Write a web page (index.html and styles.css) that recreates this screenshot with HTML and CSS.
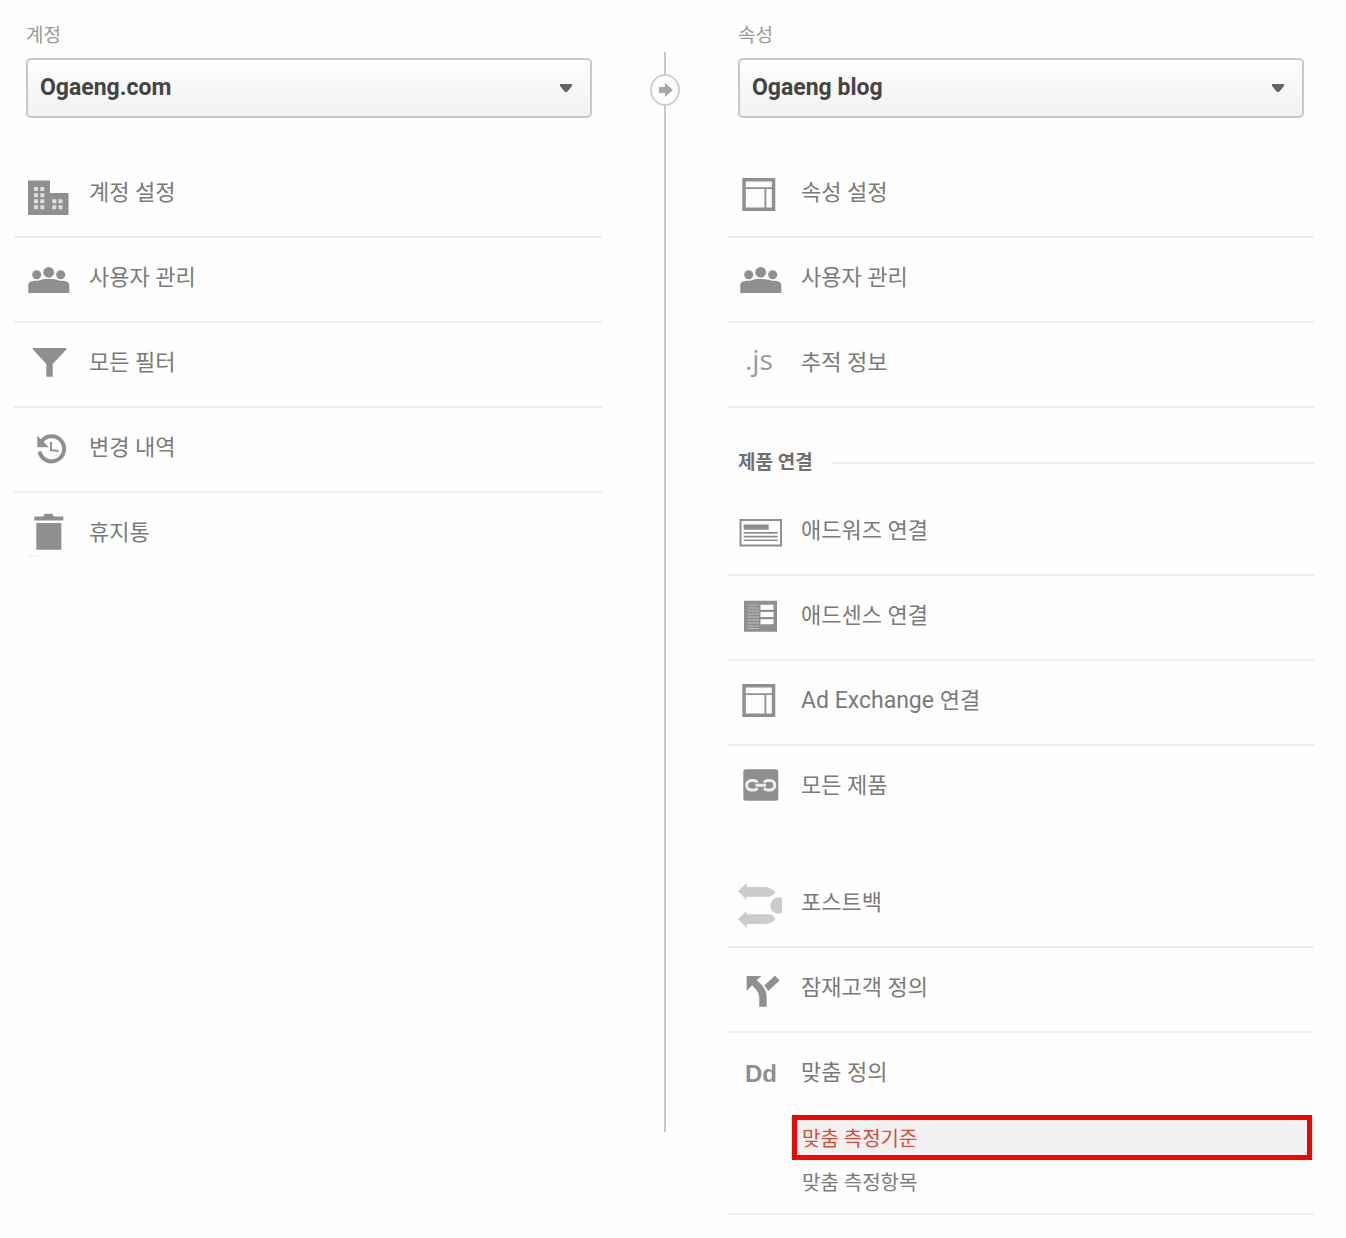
FILE: index.html
```html
<!DOCTYPE html>
<html lang="ko">
<head>
<meta charset="utf-8">
<meta name="viewport" content="width=device-width, initial-scale=1">
<title>관리</title>
<link rel="stylesheet" href="styles.css">
</head>
<body>
<svg class="sprite" aria-hidden="true">
  <symbol id="users" viewBox="0 0 44 48">
    <circle cx="10.7" cy="18.7" r="4.5"/><circle cx="22.7" cy="16.3" r="5.4"/><circle cx="34.7" cy="18.7" r="4.5"/>
    <path d="M2.3 36.9V29.500c0-3.500 2.500-4.800 9.500-4.800 3-1.300 7-1.700 11-1.700s8 .4 11 1.700c7 0 9.500 1.300 9.500 4.800v7.400z"/>
  </symbol>
  <symbol id="layout" viewBox="0 0 44 48">
    <path fill-rule="evenodd" d="M4.300 7h33v33h-33zM7.800 10.500v5.700h26v-5.700zM7.800 18v18.500h18.700V18zM28.300 18v18.500h5.500V18z"/>
  </symbol>
</svg>
<main class="admin">
  <section class="column">
    <label class="column-label" for="account">계정</label>
    <div class="picker">
      <select class="picker-select" id="account"><option>Ogaeng.com</option></select>
      <svg class="picker-caret" viewBox="0 0 12 8" aria-hidden="true"><path d="M0 0h12v2L7 8H5L0 2z"/></svg>
    </div>
    <ul class="menu">
      <li class="menu-item"><a class="menu-link" href="#">
        <svg class="icon" viewBox="0 0 44 48" aria-hidden="true"><path d="M2 9.500h22V22h18.500v22H2z"/><path class="window" d="M8 16h4v4H8zM14.300 16h4v4h-4zM8 22.300h4v4H8zM14.300 22.300h4v4h-4zM8 28.300h4v4H8zM14.300 28.300h4v4h-4zM8 34.300h4v4H8zM14.300 34.300h4v4h-4zM26.300 28.300h4v4h-4zM32.500 28.300h4v4h-4zM26.300 34.300h4v4h-4zM32.500 34.300h4v4h-4z"/></svg>
        <span>계정 설정</span></a></li>
      <li class="menu-item"><a class="menu-link" href="#">
        <svg class="icon" aria-hidden="true"><use href="#users"/></svg>
        <span>사용자 관리</span></a></li>
      <li class="menu-item"><a class="menu-link" href="#">
        <svg class="icon" viewBox="0 0 44 48" aria-hidden="true"><path d="M7 7h33.300v1.500L26.700 23v12.700h-6.400V23L7 8.500z"/></svg>
        <span>모든 필터</span></a></li>
      <li class="menu-item"><a class="menu-link" href="#">
        <svg class="icon" viewBox="0 0 44 48" aria-hidden="true"><path class="stroke-thick" d="M15.500 15.500A12.500 12.500 0 1 1 13.400 25.500"/><path d="M11.300 9.700v11.600h11.500z"/><path class="stroke-thin" d="M25 16v8.200l7.500.8"/></svg>
        <span>변경 내역</span></a></li>
      <li class="menu-item"><a class="menu-link" href="#">
        <svg class="icon" viewBox="0 0 44 48" aria-hidden="true"><path d="M8.300 5.500h9l1.500-2.700h7.500l1.500 2.700h9.500v4h-29zM10.300 12h25v26.800h-25z"/><path class="faint" d="M2 44.500h11v1H2z"/></svg>
        <span>휴지통</span></a></li>
    </ul>
  </section>

  <div class="connector">
    <svg class="connector-badge" viewBox="0 0 32 34" aria-hidden="true"><ellipse cx="16" cy="17" rx="14" ry="15"/><path d="M10 14h6v-4l8 7-8 7v-4h-6z"/></svg>
  </div>

  <section class="column">
    <label class="column-label" for="property">속성</label>
    <div class="picker">
      <select class="picker-select" id="property"><option>Ogaeng blog</option></select>
      <svg class="picker-caret" viewBox="0 0 12 8" aria-hidden="true"><path d="M0 0h12v2L7 8H5L0 2z"/></svg>
    </div>
    <ul class="menu">
      <li class="menu-item"><a class="menu-link" href="#">
        <svg class="icon" aria-hidden="true"><use href="#layout"/></svg>
        <span>속성 설정</span></a></li>
      <li class="menu-item"><a class="menu-link" href="#">
        <svg class="icon" aria-hidden="true"><use href="#users"/></svg>
        <span>사용자 관리</span></a></li>
      <li class="menu-item menu-item-ruled"><a class="menu-link" href="#">
        <svg class="icon" viewBox="0 0 44 48" aria-hidden="true"><text class="icon-js" x="7" y="29">.js</text></svg>
        <span>추적 정보</span></a></li>
    </ul>
    <h2 class="group-title">제품 연결</h2>
    <ul class="menu">
      <li class="menu-item"><a class="menu-link" href="#">
        <svg class="icon" viewBox="0 0 44 48" aria-hidden="true"><path fill-rule="evenodd" d="M1.500 10H44v27.500H1.500zM3.500 12v23.500H42V12z"/><path d="M5.700 15.500h25v5.200h-25zM5.700 23h34v1.700h-34zM5.700 26.700h34v1.700h-34zM5.700 30.400h34v1.700h-34z"/></svg>
        <span>애드워즈 연결</span></a></li>
      <li class="menu-item"><a class="menu-link" href="#">
        <svg class="icon" viewBox="0 0 44 48" aria-hidden="true"><path d="M6 6.700h33v31H6z"/><path class="rows" d="M9.500 10.500H21v1H9.500zM9.500 13.500H21v1H9.500zM9.500 16.500H21v1H9.500zM9.500 19.500H21v1H9.500zM9.500 22.500H21v1H9.500zM9.500 25.500H21v1H9.500zM9.500 28.500H21v1H9.500zM9.500 31.500H21v1H9.500zM9.500 34H21v1H9.500z"/><path class="paper" d="M22.500 10.700h13v5h-13zM22.500 18h13v5h-13zM22.500 25.300h13v5h-13z"/></svg>
        <span>애드센스 연결</span></a></li>
      <li class="menu-item"><a class="menu-link" href="#">
        <svg class="icon" viewBox="0 0 44 48" aria-hidden="true"><use href="#layout" y="-2" width="44" height="48"/></svg>
        <span><span class="latin" lang="en">Ad Exchange </span>연결</span></a></li>
      <li class="menu-item"><a class="menu-link" href="#">
        <svg class="icon" viewBox="0 0 44 48" aria-hidden="true"><rect x="5.300" y="5.300" width="35" height="31.400" rx="2.500"/><path class="chain" d="M19.500 18.500c-1-1.500-2-2-3.500-2h-2.500a4.800 4.800 0 0 0 0 9.600H16c1.500 0 2.500-.5 3.500-2M26 18.500c1-1.500 2-2 3.500-2H32a4.800 4.800 0 0 1 0 9.600h-2.500c-1.500 0-2.500-.5-3.500-2M17.500 21.300h10.500"/></svg>
        <span>모든 제품</span></a></li>
    </ul>
    <ul class="menu menu-spaced">
      <li class="menu-item"><a class="menu-link" href="#">
        <svg class="icon icon-pale" viewBox="0 0 44 48" aria-hidden="true"><path d="M0 10.300L8.700 2v4H26c5 0 9 2 11.500 5-1.500 3-4.500 4.700-7.500 4.700H8.700v3.300zM0 38l8.700-8.300v3.600H30c3 0 6 2 7.500 4.700C35 41.500 31 43 26 43H8.700v3.700z"/><circle cx="40.500" cy="24.500" r="8.200"/></svg>
        <span>포스트백</span></a></li>
      <li class="menu-item"><a class="menu-link" href="#">
        <svg class="icon" viewBox="0 0 44 48" aria-hidden="true"><path d="M8.700 10h14.600l-4.600 4.600C26 20 28.700 25 28.700 32v8.700h-7.400V32c0-5-2.300-8.500-7.300-12.500l-5.300 5.200zM26.300 19.500L37 9.500l4.500 5-11.300 10.400z"/></svg>
        <span>잠재고객 정의</span></a></li>
      <li class="menu-item menu-item-ruled menu-item-open"><a class="menu-link" href="#">
        <svg class="icon" viewBox="0 0 44 48" aria-hidden="true"><text class="icon-dd" x="7" y="31">Dd</text></svg>
        <span>맞춤 정의</span></a>
        <ul class="submenu">
          <li><a class="submenu-link submenu-link-current" href="#" aria-current="page">맞춤 측정기준</a></li>
          <li><a class="submenu-link" href="#">맞춤 측정항목</a></li>
        </ul>
      </li>
    </ul>
  </section>
</main>
</body>
</html>
```
FILE: styles.css
```css
* {
  box-sizing: border-box;
}

body {
  margin: 0;
  background: #fefefe;
  color: #7a7a7a;
  font-family: Roboto, "Noto Sans CJK KR", sans-serif;
  font-size: 22px;
  line-height: 32px;
}

a {
  color: inherit;
  text-decoration: none;
}

.sprite {
  display: none;
}

.admin {
  display: grid;
  grid-template-columns: 294fr 63fr 293fr;
  padding: 22px 32px 23px 14px;
}

.column-label {
  display: block;
  margin-left: 12px;
  color: #999;
  font-size: 19px;
  line-height: 28px;
}

.column:last-child .column-label,
.column:last-child .picker {
  margin-left: 10px;
}

/* Account and property pickers */
.picker {
  position: relative;
  margin: 8px 10px 35px 12px;
}

.picker-select {
  display: block;
  width: 100%;
  height: 60px;
  padding: 0 40px 0 12px;
  appearance: none;
  border: 2px solid #c8c8c8;
  border-radius: 5px;
  background: linear-gradient(#fefefe, #f1f1f1);
  color: #444;
  font: inherit;
  font-size: 23px;
  font-weight: 700;
}

.picker-caret {
  position: absolute;
  top: 26px;
  right: 20px;
  width: 12px;
  height: 8px;
  fill: #666;
  pointer-events: none;
}

/* Menus */
.menu,
.submenu {
  margin: 0;
  padding: 0;
  list-style: none;
}

.menu-spaced {
  margin-top: 32px;
}

.menu-item {
  min-height: 85px;
  border-bottom: 2px solid #efefef;
}

.menu-item:last-child:not(.menu-item-ruled) {
  border-bottom-color: transparent;
}

.menu-link {
  display: flex;
  gap: 19px;
  padding: 18px 12px 0;
  line-height: 43px;
}

.column:last-child .menu-link {
  padding-left: 10px;
}

.latin {
  font-size: 23px;
}

.icon {
  flex: none;
  width: 44px;
  height: 48px;
  fill: #8f8f8f;
}

.icon-pale {
  fill: #ccc;
}

.window {
  fill: #ddd;
}

.rows {
  fill: #bbb;
}

.paper {
  fill: #fefefe;
}

.faint {
  fill: #eee;
}

.stroke-thick,
.stroke-thin,
.chain {
  fill: none;
  stroke: #8f8f8f;
  stroke-width: 4;
}

.stroke-thin {
  stroke-width: 2;
}

.chain {
  stroke: #eee;
  stroke-width: 3;
}

.icon-js {
  fill: #999;
  font: 500 28px/32px "Open Sans", sans-serif;
}

.icon-dd {
  font: 700 24px/32px "Liberation Sans", sans-serif;
}

.group-title {
  display: flex;
  align-items: center;
  gap: 18px;
  margin: 0;
  padding: 39px 0 12px 10px;
  color: #707070;
  font-size: 19px;
  font-weight: 700;
}

.group-title::after {
  flex: 1;
  height: 2px;
  background: #efefef;
  content: "";
}

.menu-item-open {
  padding-bottom: 9px;
}

.submenu {
  margin: 16px 2px 0 64px;
  font-size: 20px;
}

.submenu-link {
  display: block;
  padding: 7px 10px 5px;
}

.submenu-link-current {
  padding: 3px 5px 0;
  border: 5px solid #f00;
  background: #f1f1f1;
  box-shadow: 2px 0 #f1f1f1;
  color: #dd4b39;
}

/* Vertical line joining the two columns */
.connector {
  position: relative;
  justify-self: center;
  width: 2px;
  margin: 30px 0 83px;
  background: #c8c8c8;
}

.connector-badge {
  position: absolute;
  top: 21px;
  left: -15px;
  width: 32px;
  height: 34px;
}

.connector-badge ellipse {
  fill: #fefefe;
  stroke: #d0d0d0;
  stroke-width: 2;
}

.connector-badge path {
  fill: #a6a6a6;
}
```
